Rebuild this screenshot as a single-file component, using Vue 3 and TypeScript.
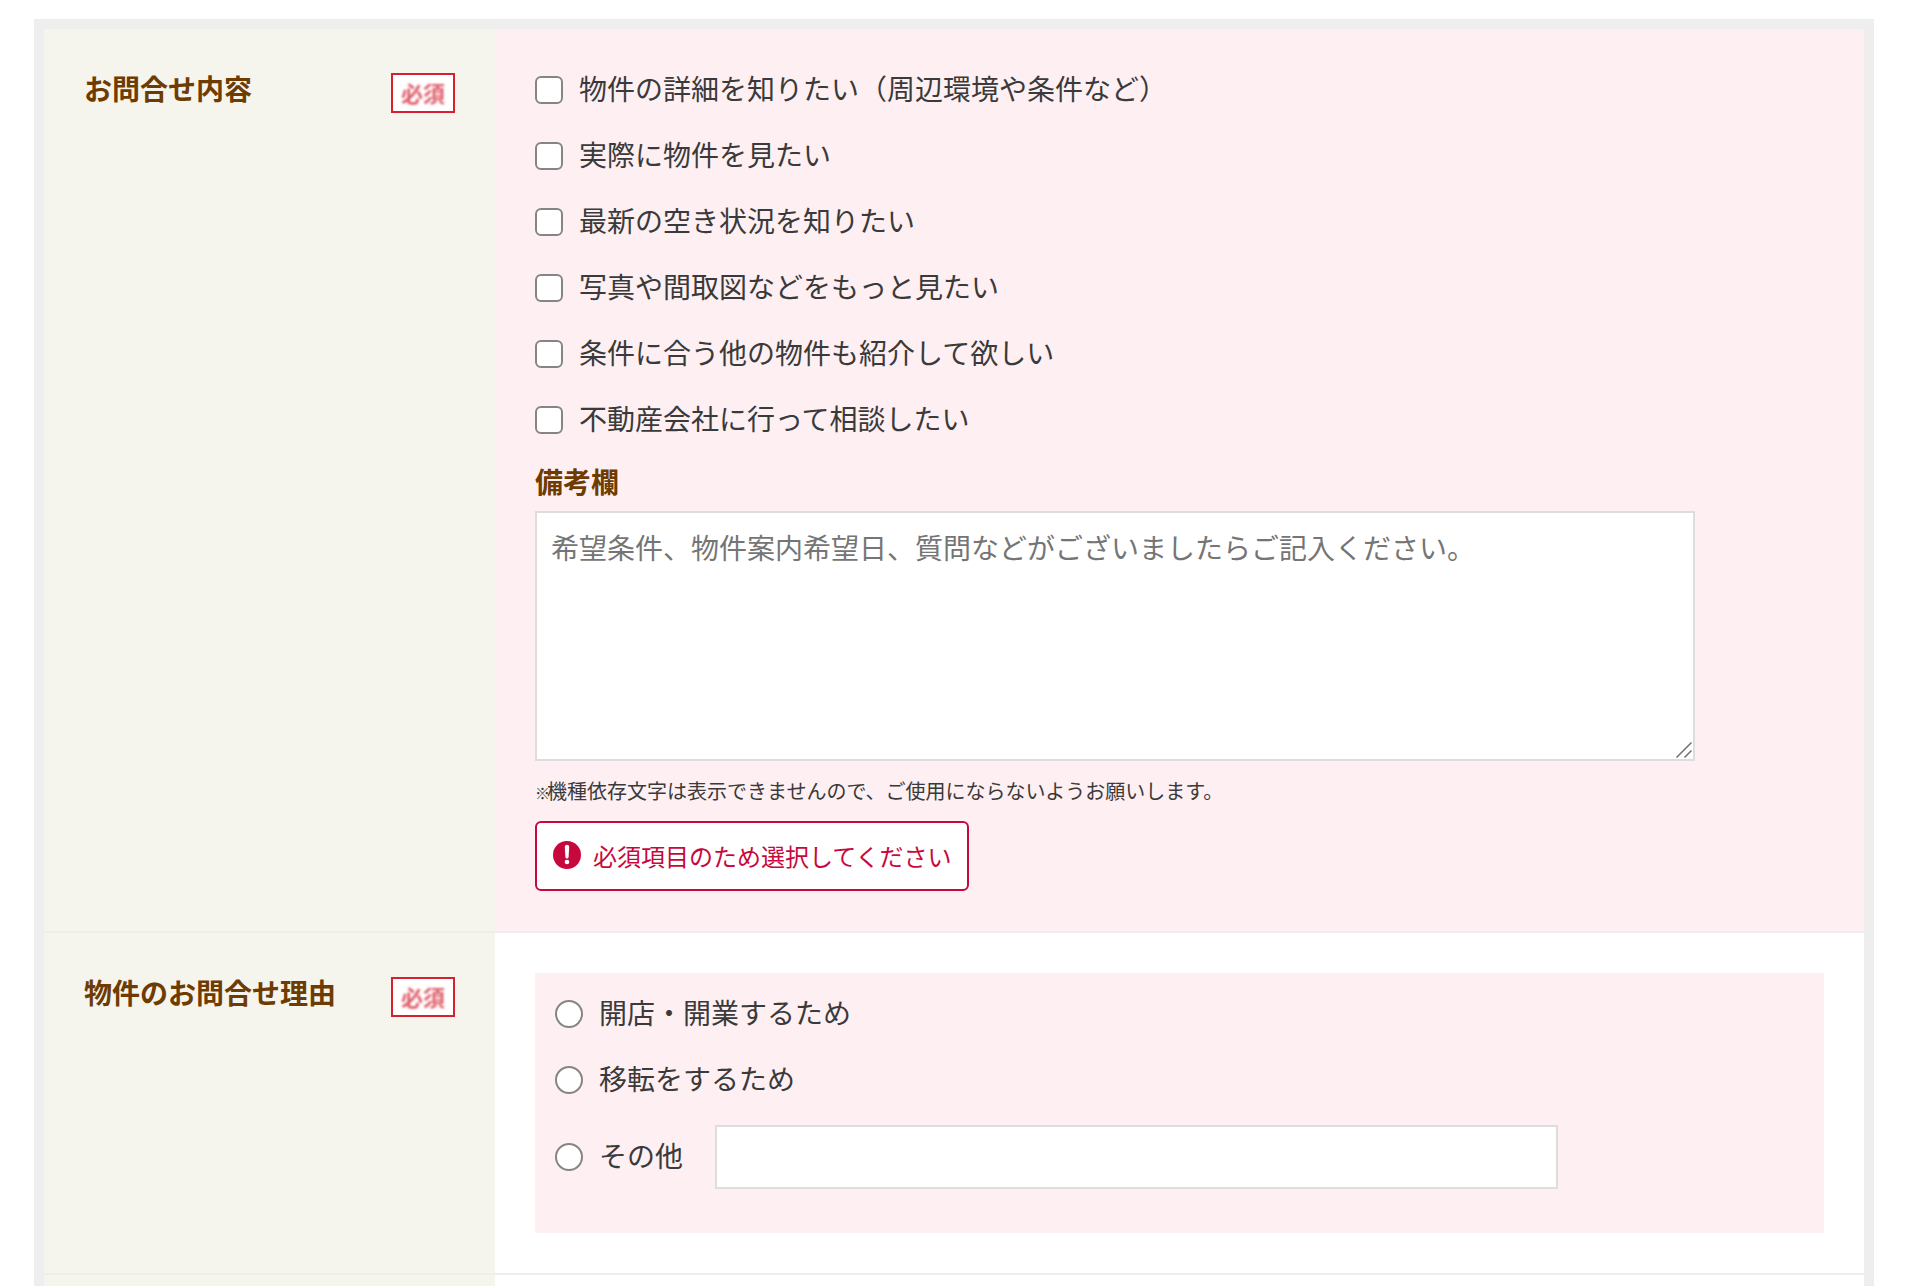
<script setup lang="ts">
const contents: string[] = [
  '物件の詳細を知りたい（周辺環境や条件など）',
  '実際に物件を見たい',
  '最新の空き状況を知りたい',
  '写真や間取図などをもっと見たい',
  '条件に合う他の物件も紹介して欲しい',
  '不動産会社に行って相談したい',
]
const reasons: string[] = ['開店・開業するため', '移転をするため']
</script>

<template>
  <div class="frame">
    <section class="row">
      <div class="head">
        <span class="title">お問合せ内容</span>
        <span class="badge"><span class="badge-text">必須</span></span>
      </div>
      <div class="cell cell-error">
        <div class="options">
          <label v-for="item in contents" :key="item" class="option">
            <input type="checkbox" class="check" />
            <span class="option-text">{{ item }}</span>
          </label>
        </div>
        <div class="sub-title">備考欄</div>
        <div class="memo-wrap">
          <textarea class="memo" placeholder="希望条件、物件案内希望日、質問などがございましたらご記入ください。"></textarea>
          <svg class="grip" viewBox="0 0 16 16" aria-hidden="true">
            <path d="M0.5 15.5 15.5 0.5M8.5 15.5 15.5 8.5" stroke="#6f6f6f" stroke-width="1.5" fill="none" />
          </svg>
        </div>
        <p class="note"><span class="kome">※</span>機種依存文字は表示できませんので、ご使用にならないようお願いします。</p>
        <div class="error">
          <svg class="error-icon" viewBox="0 0 28 28" aria-hidden="true">
            <circle cx="14" cy="14" r="14" fill="#c8083c" />
            <path d="M11.8 6a2.2 2.2 0 0 1 4.4 0l-.6 10a1.6 1.6 0 0 1-3.2 0z" fill="#fff" />
            <circle cx="14" cy="21" r="2.3" fill="#fff" />
          </svg>
          <span>必須項目のため選択してください</span>
        </div>
      </div>
    </section>

    <section class="row">
      <div class="head">
        <span class="title">物件のお問合せ理由</span>
        <span class="badge"><span class="badge-text">必須</span></span>
      </div>
      <div class="cell">
        <div class="panel">
          <label v-for="item in reasons" :key="item" class="option">
            <input type="radio" name="reason" class="radio" />
            <span class="option-text">{{ item }}</span>
          </label>
          <div class="other">
            <label class="option">
              <input type="radio" name="reason" class="radio" />
              <span class="option-text">その他</span>
            </label>
            <input type="text" class="other-input" />
          </div>
        </div>
      </div>
    </section>

    <section class="row row-last">
      <div class="head"></div>
      <div class="cell-empty"></div>
    </section>
  </div>
</template>

<style>
html,
body {
  margin: 0;
  background: #fff;
  overflow: hidden;
}
</style>

<style scoped>
.frame {
  box-sizing: border-box;
  display: flex;
  flex-direction: column;
  width: 1840px;
  height: 1267px;
  margin: 19px 0 0 34px;
  border: 10px solid #eee;
  border-bottom: 0;
  font-family: "Noto Sans CJK JP", "Noto Sans", sans-serif;
  font-size: 28px;
  line-height: 42px;
  color: #3a3a3a;
}

.row {
  display: flex;
  border-bottom: 2px solid #eee;
}

.row-last {
  flex: 1;
  border-bottom: 0;
}

.head {
  box-sizing: border-box;
  flex: 0 0 451px;
  display: flex;
  justify-content: space-between;
  align-items: flex-start;
  padding: 40px;
  background: #f5f4ed;
}

.row-last .head {
  padding: 0;
}

.title {
  margin-top: -2px;
  font-weight: 700;
  color: #6e3b00;
}

.badge {
  box-sizing: border-box;
  display: flex;
  align-items: center;
  justify-content: center;
  width: 64px;
  height: 40px;
  margin-top: 4px;
  border: 2px solid #d6202f;
  background: #fff;
}

.badge-text {
  margin-bottom: 2px;
  font-size: 22px;
  line-height: 1;
  font-weight: 700;
  color: #e0606c;
  filter: blur(1px);
}

.cell {
  flex: 1;
  padding: 40px;
}

.cell-error {
  background: #feeff2;
}

.options {
  display: flex;
  flex-direction: column;
  gap: 24px;
  margin-bottom: 20px;
}

.option {
  display: flex;
  align-items: center;
  height: 42px;
}

.option-text {
  margin-bottom: 4px;
}

.check,
.radio {
  appearance: none;
  box-sizing: border-box;
  flex: none;
  width: 28px;
  height: 28px;
  margin: 0 16px 0 0;
  border: 2px solid #858585;
  background: #fff;
}

.check {
  border-radius: 6px;
}

.radio {
  border-radius: 50%;
}

.sub-title {
  margin: -1px 0 9px;
  font-weight: 700;
  color: #6e3b00;
}

.memo-wrap {
  position: relative;
  width: 1160px;
  height: 250px;
}

.memo {
  display: block;
  box-sizing: border-box;
  width: 100%;
  height: 100%;
  padding: 13px 14px;
  border: 2px solid #ddd;
  border-radius: 0;
  outline: none;
  resize: none;
  background: #fff;
  font: inherit;
  color: inherit;
}

.memo::placeholder {
  color: #757575;
  opacity: 1;
}

.grip {
  position: absolute;
  right: 3px;
  bottom: 3px;
  width: 16px;
  height: 16px;
  pointer-events: none;
}

.note {
  margin: 15px 0;
  font-size: 20px;
  line-height: 30px;
}

.kome {
  font-size: 15px;
  font-weight: 900;
  line-height: 1;
  letter-spacing: -3px;
}

.error {
  box-sizing: border-box;
  display: flex;
  align-items: center;
  gap: 12px;
  width: 434px;
  height: 70px;
  padding-left: 16px;
  border: 2px solid #c8083c;
  border-radius: 6px;
  background: #fff;
  font-size: 24px;
  white-space: nowrap;
  color: #c8083c;
}

.error-icon {
  flex: none;
  width: 28px;
  height: 28px;
  margin-bottom: 2px;
}

.panel {
  display: flex;
  flex-direction: column;
  gap: 24px;
  padding: 20px 20px 44px;
  background: #feeff2;
}

.other {
  display: flex;
  align-items: center;
  gap: 32px;
}

.other-input {
  box-sizing: border-box;
  width: 843px;
  height: 64px;
  padding: 0 14px;
  border: 2px solid #ddd;
  border-radius: 0;
  outline: none;
  background: #fff;
  font: inherit;
}

.cell-empty {
  flex: 1;
}
</style>
